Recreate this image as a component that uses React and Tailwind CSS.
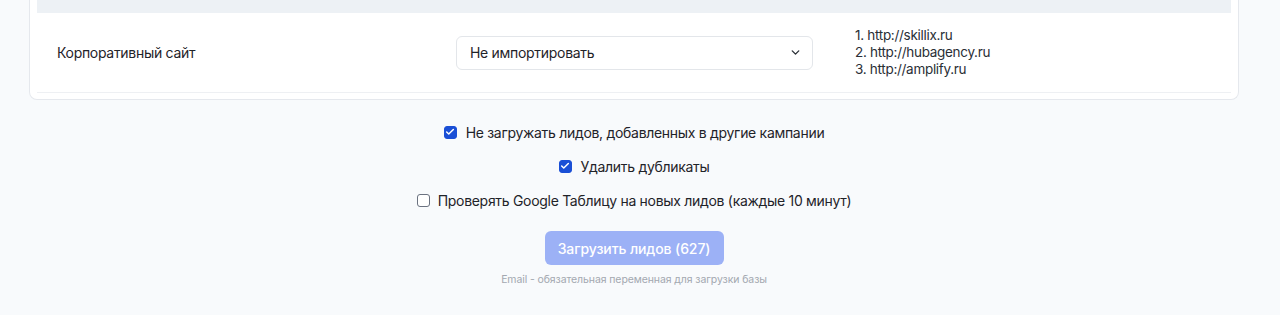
import React, { useState } from 'react';
import { ChevronDown, Check } from 'lucide-react';

const sites = ['http://skillix.ru', 'http://hubagency.ru', 'http://amplify.ru'];

const Box = ({ checked, onClick }) => (
  <button
    type="button"
    onClick={onClick}
    className={`w-[13px] h-[13px] rounded-[3px] flex items-center justify-center shrink-0 ${
      checked ? 'bg-[#1a4fd6] border border-[#1a4fd6]' : 'bg-white border border-[#6b7280]'
    }`}
  >
    {checked && <Check className="w-[10px] h-[10px] text-white" strokeWidth={3.5} />}
  </button>
);

export default function App() {
  const [opts, setOpts] = useState({ skip: true, dedupe: true, watch: false });
  const toggle = (k) => setOpts((p) => ({ ...p, [k]: !p[k] }));

  return (
    <div className="min-h-[315px] bg-[#f8fafc] text-[#1f2329] font-['Inter','Noto_Sans',sans-serif] tracking-[-0.3px]">
      <div className="ml-[29px] w-[1210px]">
        {/* mapping card, top cut off */}
        <div className="bg-white border border-t-0 border-[#e5e8ed] rounded-b-lg px-[7px] pb-[6px]">
          <div className="h-[13px] bg-[#edf1f5]" />
          <div className="h-[80px] flex items-center pl-[20px] border-b border-[#eef0f3]">
            <div className="w-[399px] text-[14px]">Корпоративный сайт</div>
            <div className="w-[357px] h-[34px] border border-[#e3e6ea] rounded-md flex items-center justify-between pl-[13px] pr-[10px] text-[14px]">
              <span>Не импортировать</span>
              <ChevronDown className="w-[13px] h-[13px] text-[#2a2f36]" strokeWidth={2.5} />
            </div>
            <ol className="ml-[42px] text-[13.5px] leading-[17px] text-[#2a2f36]">
              {sites.map((s, i) => (
                <li key={s}>
                  {i + 1}. {s}
                </li>
              ))}
            </ol>
          </div>
        </div>

        <div className="flex flex-col items-center mt-[22px] gap-[14px] text-[14px]">
          <label className="h-5 flex items-center gap-[9px]">
            <Box checked={opts.skip} onClick={() => toggle('skip')} />
            <span>Не загружать лидов, добавленных в другие кампании</span>
          </label>
          <label className="h-5 flex items-center gap-[9px]">
            <Box checked={opts.dedupe} onClick={() => toggle('dedupe')} />
            <span>Удалить дубликаты</span>
          </label>
          <label className="h-5 flex items-center gap-[8px]">
            <Box checked={opts.watch} onClick={() => toggle('watch')} />
            <span>Проверять Google Таблицу на новых лидов (каждые 10 минут)</span>
          </label>
        </div>

        <div className="flex flex-col items-center mt-[21px]">
          <button
            type="button"
            disabled
            className="w-[179px] h-[34px] rounded-md bg-[#9cb1f6] text-white text-[14px] tracking-[-0.1px] font-medium"
          >
            Загрузить лидов (627)
          </button>
          <p className="mt-[8px] text-[10.5px] leading-[14px] tracking-[-0.1px] text-[#a3a8b0]">
            Email - обязательная переменная для загрузки базы
          </p>
        </div>
      </div>
    </div>
  );
}
